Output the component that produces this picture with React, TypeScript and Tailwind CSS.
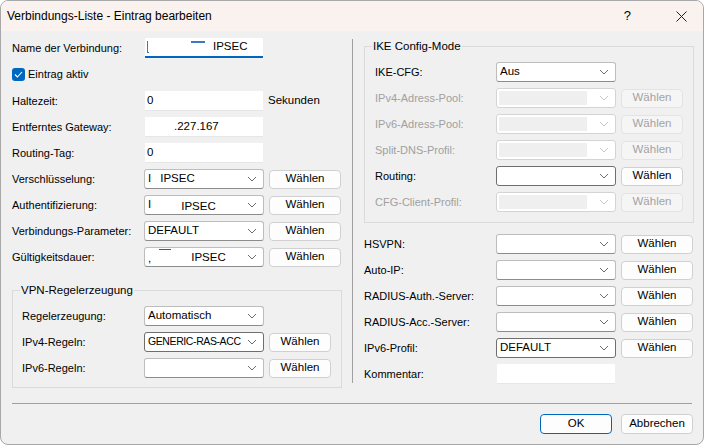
import React from "react";

const font = { fontFamily: '"Liberation Sans", Arial, sans-serif' };

function Chevron({ disabled }: { disabled?: boolean }) {
    return (
        <svg width="10" height="6" viewBox="0 0 10 6" className="shrink-0">
            <path d="M1 1 L5 5 L9 1" fill="none" stroke={disabled ? "#c8c8c8" : "#6b6b6b"} strokeWidth="1" />
        </svg>
    );
}

function Combo({ children, dark, disabled }: { children?: React.ReactNode; dark?: boolean; disabled?: boolean }) {
    if (disabled) {
        return (
            <div className="w-[120px] h-[20px] bg-white border border-[#d4d4d4] rounded-[3px] flex items-center pl-[2px] pr-[6px] shrink-0">
                <div className="flex-1 h-[14px] bg-[#efefef] mr-[12px]" />
                <Chevron disabled />
            </div>
        );
    }
    return (
        <div
            className={`w-[120px] h-[20px] bg-white border rounded-[3px] flex items-center pl-[3px] pr-[6px] shrink-0 ${dark ? "border-[#6e6e6e]" : "border-[#bdbdbd] border-b-[#8c8c8c]"}`}
        >
            <div className="flex-1 flex items-center overflow-hidden whitespace-nowrap text-[11.5px] text-black">{children}</div>
            <Chevron />
        </div>
    );
}

function Btn({ w = "w-[72px]", disabled, children = "Wählen" }: { w?: string; disabled?: boolean; children?: React.ReactNode }) {
    return (
        <div
            className={`${w} h-[19px] ml-[5px] rounded-[4px] border flex items-center justify-center text-[11.5px] shrink-0 ${disabled ? "bg-[#f5f5f5] border-[#e3e3e3] text-[#a3a3a3]" : "bg-[#fdfdfd] border-[#d0d0d0] text-black"}`}
        >
            {children}
        </div>
    );
}

function TextBox({ children, focused }: { children?: React.ReactNode; focused?: boolean }) {
    return (
        <div
            className={`w-[118px] h-[20px] bg-white flex items-center pl-[2px] text-[11.5px] text-black whitespace-nowrap overflow-hidden shrink-0 ${focused ? "border-b-2 border-[#0067c0]" : "border-b border-[#e6e6e6]"}`}
        >
            {children}
        </div>
    );
}

function Row({ label, lw, disabled, children }: { label: string; lw: string; disabled?: boolean; children?: React.ReactNode }) {
    return (
        <div className="h-[26px] flex items-center">
            <div className={`${lw} shrink-0 text-[11px] ${disabled ? "text-[#a0a0a0]" : "text-black"}`}>{label}</div>
            {children}
        </div>
    );
}

function Group({ title, children, className }: { title: string; children: React.ReactNode; className?: string }) {
    return (
        <div className={`relative border border-[#dadada] ${className ?? ""}`}>
            <div className="absolute -top-[8px] left-[7px] bg-[#f0f0f0] px-[1px] text-[11.5px] leading-[14px] text-black">{title}</div>
            {children}
        </div>
    );
}

export default function App() {
    return (
        <div className="w-[704px] h-[445px] bg-[#f0f0f0] border border-[#a8a8a8] rounded-[8px] overflow-hidden flex flex-col" style={font}>
            {/* Title bar */}
            <div className="h-[30px] shrink-0 bg-[#f9f2ef] flex items-center pl-[6px] pr-[16px]">
                <div className="flex-1 text-[12px] text-black">Verbindungs-Liste - Eintrag bearbeiten</div>
                <div className="text-[13px] text-black mr-[45px]">?</div>
                <svg width="11" height="11" viewBox="0 0 11 11">
                    <path d="M0.5 0.5 L10.5 10.5 M10.5 0.5 L0.5 10.5" stroke="#202020" strokeWidth="1" />
                </svg>
            </div>

            {/* Body */}
            <div className="h-[372px] flex pl-[11px]">
                {/* Left column */}
                <div className="w-[330px] pt-[4px] flex flex-col">
                    <Row label="Name der Verbindung:" lw="w-[133px]">
                        <TextBox focused>
                            <span className="w-[2px] h-[12px] border-l border-b border-[#3b78c6] mr-[42px]" />
                            <span className="w-[14px] h-[2px] bg-[#3b78c6] self-start mt-[3px] mr-[8px]" />
                            <span>IPSEC</span>
                        </TextBox>
                    </Row>
                    <div className="h-[27px] flex items-center">
                        <div className="w-[13px] h-[13px] rounded-[3px] bg-[#0067c0] flex items-center justify-center mr-[3px]">
                            <svg width="9" height="7" viewBox="0 0 9 7">
                                <path d="M1 3.5 L3.4 6 L8 1" fill="none" stroke="white" strokeWidth="1.1" />
                            </svg>
                        </div>
                        <span className="text-[11px] text-black">Eintrag aktiv</span>
                    </div>
                    <Row label="Haltezeit:" lw="w-[133px]">
                        <TextBox>0</TextBox>
                        <span className="ml-[5px] text-[11.5px] text-black">Sekunden</span>
                    </Row>
                    <Row label="Entferntes Gateway:" lw="w-[133px]">
                        <TextBox>
                            <span className="pl-[27px]">.227.167</span>
                        </TextBox>
                    </Row>
                    <Row label="Routing-Tag:" lw="w-[133px]">
                        <TextBox>0</TextBox>
                    </Row>
                    <Row label="Verschlüsselung:" lw="w-[132px]">
                        <Combo>
                            <span className="mr-[9px]">I</span>
                            <span>IPSEC</span>
                        </Combo>
                        <Btn />
                    </Row>
                    <Row label="Authentifizierung:" lw="w-[132px]">
                        <Combo>
                            <span className="mr-[30px] self-start mt-[1px]">I</span>
                            <span className="mt-[3px]">IPSEC</span>
                        </Combo>
                        <Btn />
                    </Row>
                    <Row label="Verbindungs-Parameter:" lw="w-[132px]">
                        <Combo>DEFAULT</Combo>
                        <Btn />
                    </Row>
                    <Row label="Gültigkeitsdauer:" lw="w-[132px]">
                        <Combo>
                            <span className="mr-[8px] mt-[4px]">,</span>
                            <span className="w-[12px] h-[1px] bg-[#555] self-start mt-[3px] mr-[20px]" />
                            <span className="mt-[2px]">IPSEC</span>
                        </Combo>
                        <Btn />
                    </Row>

                    <Group title="VPN-Regelerzeugung" className="mt-[20px] pt-[12px] pb-[6px] pl-[9px]">
                        <Row label="Regelerzeugung:" lw="w-[122px]">
                            <Combo>Automatisch</Combo>
                        </Row>
                        <Row label="IPv4-Regeln:" lw="w-[122px]">
                            <Combo dark>
                                <span className="text-[10.5px] tracking-[-0.4px]">GENERIC-RAS-ACC</span>
                            </Combo>
                            <Btn w="w-[62px]" />
                        </Row>
                        <Row label="IPv6-Regeln:" lw="w-[122px]">
                            <Combo />
                            <Btn w="w-[62px]" />
                        </Row>
                    </Group>
                </div>

                {/* Divider */}
                <div className="w-px bg-[#a0a0a0] ml-[10px] mr-[11px] mt-[8px] mb-[20px]" />

                {/* Right column */}
                <div className="w-[330px] pt-[15px] flex flex-col">
                    <Group title="IKE Config-Mode" className="pt-[12px] pb-[7px] pl-[10px]">
                        <Row label="IKE-CFG:" lw="w-[121px]">
                            <Combo>Aus</Combo>
                        </Row>
                        <Row label="IPv4-Adress-Pool:" lw="w-[121px]" disabled>
                            <Combo disabled />
                            <Btn w="w-[62px]" disabled />
                        </Row>
                        <Row label="IPv6-Adress-Pool:" lw="w-[121px]" disabled>
                            <Combo disabled />
                            <Btn w="w-[62px]" disabled />
                        </Row>
                        <Row label="Split-DNS-Profil:" lw="w-[121px]" disabled>
                            <Combo disabled />
                            <Btn w="w-[62px]" disabled />
                        </Row>
                        <Row label="Routing:" lw="w-[121px]">
                            <Combo dark />
                            <Btn w="w-[62px]" />
                        </Row>
                        <Row label="CFG-Client-Profil:" lw="w-[121px]" disabled>
                            <Combo disabled />
                            <Btn w="w-[62px]" disabled />
                        </Row>
                    </Group>

                    <div className="mt-[8px] flex flex-col">
                        <Row label="HSVPN:" lw="w-[132px]">
                            <Combo />
                            <Btn />
                        </Row>
                        <Row label="Auto-IP:" lw="w-[132px]">
                            <Combo />
                            <Btn />
                        </Row>
                        <Row label="RADIUS-Auth.-Server:" lw="w-[132px]">
                            <Combo />
                            <Btn />
                        </Row>
                        <Row label="RADIUS-Acc.-Server:" lw="w-[132px]">
                            <Combo />
                            <Btn />
                        </Row>
                        <Row label="IPv6-Profil:" lw="w-[132px]">
                            <Combo dark>DEFAULT</Combo>
                            <Btn />
                        </Row>
                        <Row label="Kommentar:" lw="w-[133px]">
                            <TextBox />
                        </Row>
                    </div>
                </div>
            </div>

            {/* Footer */}
            <div className="mx-[11px] border-t border-[#a0a0a0]" />
            <div className="flex justify-end pt-[10px] pr-[10px]">
                <div className="w-[72px] h-[20px] rounded-[4px] border border-[#0067c0] bg-[#fdfdfd] flex items-center justify-center text-[11.5px] text-black">OK</div>
                <div className="w-[72px] h-[20px] ml-[9px] rounded-[4px] border border-[#d0d0d0] bg-[#fdfdfd] flex items-center justify-center text-[11.5px] text-black">Abbrechen</div>
            </div>
        </div>
    );
}
